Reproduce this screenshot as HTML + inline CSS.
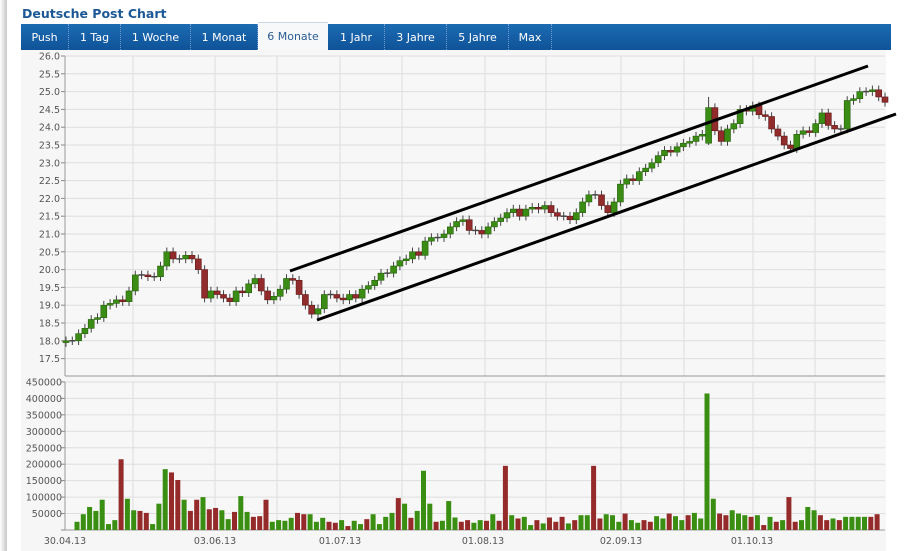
<!DOCTYPE html>
<html><head><meta charset="utf-8"><style>
body{margin:0;width:905px;height:551px;overflow:hidden;background:#fff;font-family:"DejaVu Sans","Liberation Sans",sans-serif;position:relative}
.sh{position:absolute;left:0;top:0;width:7px;height:551px;background:linear-gradient(to right,#fff,#ddd 60%,#c8c8c8)}
.title{position:absolute;left:22px;top:6px;font:bold 12.5px "DejaVu Sans","Liberation Sans",sans-serif;color:#1d5896}
.bar{position:absolute;left:21px;top:24px;width:870px;height:26px;background:linear-gradient(#1c6bb3,#0f5398)}
.tab{position:absolute;top:0;height:26px;line-height:27px;color:#fff;font-size:11px;text-align:center;border-right:1px dotted #6f9ccc;box-sizing:border-box}
.act{background:#f7f8fa;color:#2a5d92;top:-2px;height:28px;border-top:1px solid #cbd6e4;border-right:none}
.panel{position:absolute;left:21px;top:50px;width:865px;height:501px;background:#f6f6f6}
svg{position:absolute;left:0;top:0}
</style></head><body>
<div class="sh"></div>
<div class="title">Deutsche Post Chart</div>
<div class="panel"></div>
<div class="bar">
<div class="tab" style="left:0;width:48px">Push</div>
<div class="tab" style="left:48px;width:52px">1 Tag</div>
<div class="tab" style="left:100px;width:70px">1 Woche</div>
<div class="tab" style="left:170px;width:67px">1 Monat</div>
<div class="tab act" style="left:237px;width:70px">6 Monate</div>
<div class="tab" style="left:307px;width:57px">1 Jahr</div>
<div class="tab" style="left:364px;width:62px">3 Jahre</div>
<div class="tab" style="left:426px;width:62px">5 Jahre</div>
<div class="tab" style="left:488px;width:43px">Max</div>
</div>
<svg id="c" width="905" height="551" font-family="DejaVu Sans, Liberation Sans, sans-serif" font-size="9.5"></svg>
<script>
var s='';
var L=65,R=885;
function py(p){return 56+(26-p)*35.6;}
function vy(v){return 530-v*0.329;}
var vx=[133,215,277,340,402,485,546,621,684,753,815];
s+='<rect x="'+L+'" y="56" width="'+(R-L)+'" height="320" fill="#f7f7f7"/>';
s+='<rect x="'+L+'" y="382" width="'+(R-L)+'" height="148" fill="#f7f7f7"/>';
for(var p=26;p>=17.5;p-=0.5){var y=py(p);s+='<line x1="'+L+'" x2="'+R+'" y1="'+y+'" y2="'+y+'" stroke="#dedede"/>';s+='<line x1="'+(L-4)+'" x2="'+L+'" y1="'+y+'" y2="'+y+'" stroke="#888"/>';s+='<text x="'+(L-5)+'" y="'+(y+3.5)+'" text-anchor="end" fill="#555">'+p.toFixed(1)+'</text>';}
for(var v=0;v<=450;v+=50){var y=vy(v);s+='<line x1="'+L+'" x2="'+R+'" y1="'+y+'" y2="'+y+'" stroke="#dedede"/>';s+='<line x1="'+(L-4)+'" x2="'+L+'" y1="'+y+'" y2="'+y+'" stroke="#888"/>';if(v>0)s+='<text x="'+(L-3)+'" y="'+(y+3.5)+'" text-anchor="end" fill="#555">'+(v*1000)+'</text>';}
vx.forEach(function(x){s+='<line x1="'+x+'" x2="'+x+'" y1="56" y2="376" stroke="#dedede"/><line x1="'+x+'" x2="'+x+'" y1="382" y2="530" stroke="#dedede"/>';});
s+='<line x1="'+L+'" x2="'+L+'" y1="56" y2="376" stroke="#999"/><line x1="'+L+'" x2="'+R+'" y1="376" y2="376" stroke="#999"/>';
s+='<line x1="'+L+'" x2="'+L+'" y1="382" y2="530" stroke="#999"/><line x1="'+L+'" x2="'+R+'" y1="530" y2="530" stroke="#999"/>';
[["30.04.13",65],["03.06.13",215],["01.07.13",340],["01.08.13",483],["02.09.13",621],["01.10.13",752]].forEach(function(d){s+='<text x="'+d[1]+'" y="544" text-anchor="middle" fill="#555">'+d[0]+'</text>';});
var c=[18.0,18.0,18.2,18.35,18.6,18.65,19.0,19.05,19.15,19.1,19.4,19.85,19.85,19.8,19.8,20.1,20.5,20.3,20.3,20.4,20.3,20.0,19.2,19.4,19.3,19.2,19.1,19.4,19.35,19.6,19.75,19.4,19.15,19.25,19.45,19.75,19.7,19.3,19.0,18.75,18.9,19.3,19.3,19.2,19.15,19.3,19.2,19.45,19.55,19.7,19.9,19.9,20.1,20.25,20.3,20.5,20.4,20.8,20.9,20.9,21.0,21.2,21.35,21.4,21.1,21.1,21.0,21.2,21.35,21.45,21.6,21.7,21.5,21.7,21.75,21.7,21.8,21.6,21.5,21.5,21.4,21.6,21.9,22.1,22.1,21.8,21.6,21.9,22.4,22.55,22.5,22.75,22.85,23.0,23.2,23.35,23.3,23.45,23.55,23.6,23.75,23.8,24.55,23.9,23.6,23.95,24.1,24.5,24.45,24.6,24.35,24.3,23.95,23.75,23.5,23.4,23.8,23.9,23.85,24.1,24.4,24.05,23.95,23.95,24.75,24.8,25.0,25.0,25.05,24.85,24.7];
for(var i=0;i<c.length;i++){var x=66+i*6.3;var o=i==0?17.95:c[i-1];if(i==102)o=23.55;if(i==124)o=23.95;
var hi=Math.max(o,c[i])+0.12,lo=Math.min(o,c[i])-0.12;if(i==102){hi=24.85;lo=23.5;}
var col=c[i]>o?'#3b8c14':'#922b2b',bd=c[i]>o?'#24600a':'#5e1818';
if(Math.abs(c[i]-o)<0.03){s+='<line x1="'+x+'" x2="'+x+'" y1="'+py(hi)+'" y2="'+py(lo)+'" stroke="#444"/><line x1="'+(x-3)+'" x2="'+(x+3)+'" y1="'+py(c[i])+'" y2="'+py(c[i])+'" stroke="#444" stroke-width="1.5"/>';continue;}
s+='<line x1="'+x+'" x2="'+x+'" y1="'+py(hi)+'" y2="'+py(lo)+'" stroke="#444"/>';
var t=py(Math.max(o,c[i])),b=py(Math.min(o,c[i]));
s+='<rect x="'+(x-3)+'" y="'+t+'" width="6" height="'+Math.max(b-t,1.5)+'" fill="'+col+'" stroke="'+bd+'" stroke-width="0.6"/>';}
var vol=[25,48,70,58,92,18,30,-215,95,60,-58,-52,18,80,185,-175,-152,92,-58,-92,100,-63,-67,60,33,-55,103,55,-40,-42,-92,25,30,28,37,-52,-48,48,25,37,-25,-22,30,-12,28,18,-33,48,18,40,52,-97,80,-37,58,180,80,-25,28,88,
38,-25,-30,22,30,-28,48,-28,-195,45,-35,40,15,-30,20,-38,-25,-40,20,-30,45,45,-195,-35,48,45,25,-50,30,22,-30,-25,42,35,-50,42,30,-45,52,35,415,95,-50,-45,60,50,45,-40,45,-15,40,-25,30,-100,-25,30,70,60,-45,-30,35,-30,40,40,40,40,-40,-48];
for(var j=0;j<vol.length;j++){var x=77+j*6.3,v=Math.abs(vol[j]);s+='<rect x="'+(x-2.5)+'" y="'+vy(v)+'" width="5" height="'+(530-vy(v))+'" fill="'+(vol[j]>0?'#3a8f12':'#952a2a')+'"/>';}
s+='<line x1="290" y1="271" x2="868" y2="66" stroke="#000" stroke-width="3"/>';
s+='<line x1="317" y1="320" x2="896" y2="114" stroke="#000" stroke-width="3"/>';
document.getElementById('c').innerHTML=s;
</script>
</body></html>
